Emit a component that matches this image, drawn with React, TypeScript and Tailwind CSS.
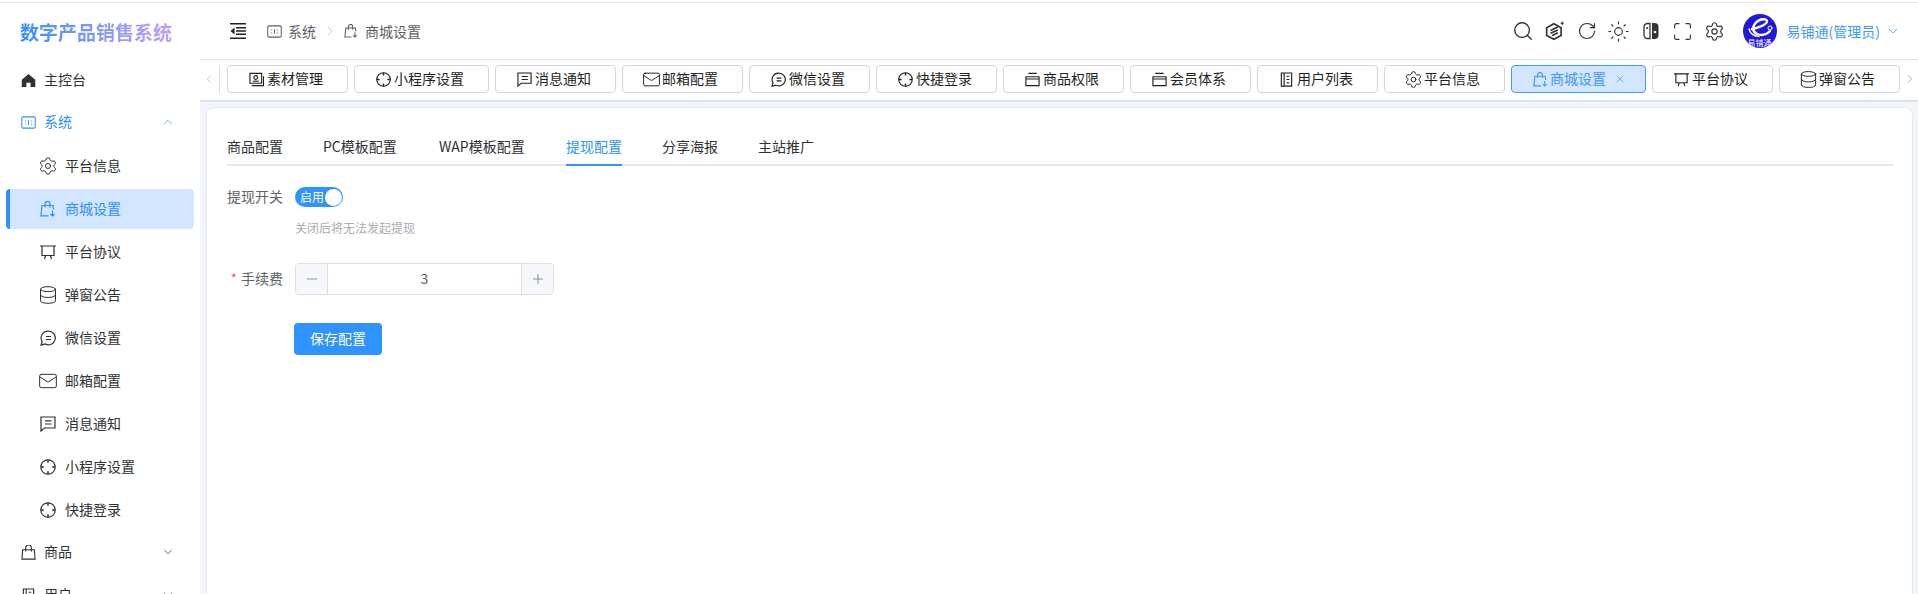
import { ChevronDown, ChevronLeft, ChevronRight, ChevronUp, Database, Mail, Maximize, Minus, Plus, RotateCw, Search, Settings, Sun, X } from "lucide-react";
import type { ReactNode } from "react";

type IconProps = { className?: string };

const HomeIcon = ({ className }: IconProps) => (
  <svg viewBox="0 0 16 16" className={className} fill="currentColor">
    <path d="M8 1 15.2 7.2V15H10.2V10.4H5.8V15H.8V7.2Z" />
  </svg>
);

const SystemIcon = ({ className }: IconProps) => (
  <svg viewBox="0 0 16 16" className={className} fill="none" stroke="currentColor" strokeWidth="1.1">
    <rect x=".8" y="2" width="14.4" height="12" rx="1.5" />
    <path d="M5 5.800v1.200M5 9v1.200M8 5.500v5M11 5.800v1.200M11 9v1.200" />
  </svg>
);

const BagArrowIcon = ({ className }: IconProps) => (
  <svg viewBox="0 0 16 16" className={className} fill="none" stroke="currentColor" strokeWidth="1.2">
    <path d="M8.500 14.800H1L2 4.500H13L13.500 8.500" />
    <path d="M5 6.500V3a2.500 2.500 0 0 1 5 0v3.500" />
    <path d="M12.500 9.500v5.500M10.500 13l2 2 2-2" />
  </svg>
);

const BoardIcon = ({ className }: IconProps) => (
  <svg viewBox="0 0 16 16" className={className} fill="none" stroke="currentColor" strokeWidth="1.2">
    <path d="M0 2h16M2 2v9.500h12V2M5.500 11.500 4.500 15M10.500 11.500l1 3.500" />
  </svg>
);

const ChatIcon = ({ className }: IconProps) => (
  <svg viewBox="0 0 16 16" className={className} fill="none" stroke="currentColor" strokeWidth="1.2">
    <path d="M8.500 1.200a6.800 6.800 0 1 1-3.200 12.800L1 15.200l1.200-3.600A6.800 6.800 0 0 1 8.500 1.200Z" />
    <path d="M6 6.500h5M6 9.500h5" />
  </svg>
);

const NoticeIcon = ({ className }: IconProps) => (
  <svg viewBox="0 0 16 16" className={className} fill="none" stroke="currentColor" strokeWidth="1.2">
    <path d="M1 1h14v11H4.500L1 15Z" />
    <path d="M5 4.800h6.500M5 8h6.500" />
  </svg>
);

const TargetIcon = ({ className }: IconProps) => (
  <svg viewBox="0 0 16 16" className={className} fill="none" stroke="currentColor" strokeWidth="1.2">
    <circle cx="8" cy="8" r="7.200" />
    <path d="M8 .8v3M8 12.200v3M.8 8h3M12.200 8h3" strokeWidth="1.500" />
  </svg>
);

const ShopBagIcon = ({ className }: IconProps) => (
  <svg viewBox="0 0 16 16" className={className} fill="none" stroke="currentColor" strokeWidth="1.2">
    <path d="M1.800 5h12.400l.8 10H1Z" />
    <path d="M5 7V3a3 3 0 0 1 6 0v4" />
  </svg>
);

const BookIcon = ({ className }: IconProps) => (
  <svg viewBox="0 0 16 16" className={className} fill="none" stroke="currentColor" strokeWidth="1.2">
    <path d="M2.500 1h11v14h-11ZM5.500 1v14M8 4.500h3M8 8h3M8 11.500h3" />
  </svg>
);

const StackBoxIcon = ({ className }: IconProps) => (
  <svg viewBox="0 0 16 16" className={className} fill="none" stroke="currentColor" strokeWidth="1.2">
    <path d="M3.500 1.500h9M1 5h14v9.500H1ZM1 7.500h14" />
  </svg>
);

const MediaIcon = ({ className }: IconProps) => (
  <svg viewBox="0 0 16 16" className={className} fill="none" stroke="currentColor" strokeWidth="1.2">
    <path d="M1 1.500h12.500v10.500H1Z" />
    <path d="M3 14.500h12.500V4.500" />
    <circle cx="7.200" cy="5.800" r="2" />
    <path d="M4 9.800h6.500" />
  </svg>
);

const CollapseIcon = ({ className }: IconProps) => (
  <svg viewBox="0 0 16 16" className={className} fill="currentColor">
    <path d="M0 0h16v1.600H0ZM0 14.400h16V16H0ZM6 4h10v1.500H6ZM6 7.200h10v1.500H6ZM6 10.500h10V12H6ZM4.500 4.500v7L.5 8Z" />
  </svg>
);

const HexIcon = ({ className }: IconProps) => (
  <svg viewBox="0 0 18 18" className={className} fill="none" stroke="currentColor" strokeWidth="1.500">
    <path d="M8 2.500 14.500 6v7L8 16.500 1.500 13V6Z" />
    <path d="M5 8.500 11.500 5.500M5 11 11.500 8M6.500 13 11.500 10.500" />
    <path d="M15.500 .5v3M14 2h3" strokeWidth="1" />
  </svg>
);

const SwitchIcon = ({ className }: IconProps) => (
  <svg viewBox="0 0 16 18" className={className}>
    <path d="M7 1.500H4.500a3.500 3.500 0 0 0-3.500 3.500v8a3.500 3.500 0 0 0 3.500 3.500H7Z" fill="none" stroke="currentColor" strokeWidth="1.300" />
    <path d="M9 1h2.500A4 4 0 0 1 15.500 5v8a4 4 0 0 1-4 4H9Z" fill="currentColor" />
    <circle cx="4.200" cy="6" r="1.100" fill="currentColor" />
    <circle cx="12" cy="10" r="1.300" fill="#fff" />
  </svg>
);

const Avatar = () => (
  <div className="relative h-[34px] w-[34px] overflow-hidden rounded-full bg-[#2318d8]">
    <svg viewBox="0 0 34 34" className="absolute inset-0 h-full w-full" fill="none" stroke="#fff" strokeLinecap="round">
      <path d="M9 15C15 14 23 11 24 7.500 24.500 4.500 17 4 12.500 9 9 13 9.500 18 14 20c5 2 10 0 13-3" strokeWidth="2.400" />
      <path d="M6 15c1 4 5 7 10 7.500" strokeWidth="1.400" />
      <circle cx="27" cy="14" r="2" strokeWidth="1" />
    </svg>
    <span className="absolute inset-x-0 bottom-[1px] text-center text-[8px] leading-[9px] whitespace-nowrap text-white">易铺通</span>
  </div>
);

function TopItem({ icon, label, open, active }: { icon: ReactNode; label: string; open?: boolean; active?: boolean }) {
  return (
    <div className={`flex h-10 items-center gap-[8px] pl-[15px] ${active ? "text-[#2f8fff]" : "text-[#303133]"}`}>
      {icon}
      <span className="pb-[2px]">{label}</span>
      {open === undefined ? null : open ? (
        <ChevronUp className="mr-[19px] ml-auto h-[14px] w-[14px]" strokeWidth={1.2} />
      ) : (
        <ChevronDown className="mr-[19px] ml-auto h-[14px] w-[14px]" strokeWidth={1.2} />
      )}
    </div>
  );
}

function SubItem({ icon, label, active }: { icon: ReactNode; label: string; active?: boolean }) {
  return (
    <div
      className={`flex h-10 items-center gap-[9px] rounded-[4px] ${
        active ? "border-l-4 border-[#2f8fff] bg-[#d2e6ff] pl-[30px] text-[#2f8fff]" : "pl-[34px] text-[#303133]"
      }`}
    >
      {icon}
      <span className="pb-[2px]">{label}</span>
    </div>
  );
}

function Tab({ icon, label }: { icon: ReactNode; label: string }) {
  return (
    <div className="flex h-7 shrink-0 items-center gap-[3px] rounded-[4px] border border-[#d4d4dc] bg-white pr-[24px] pl-[21px] text-[#1f1f1f]">
      {icon}
      <span className="pb-[2px]">{label}</span>
    </div>
  );
}

const i16 = "h-4 w-4 shrink-0";
const i15 = "h-[15px] w-[15px] shrink-0";
// los iconos de lucide traen aire dentro del viewBox
const side = "-m-[2px] h-5 w-5 shrink-0";
const tabIcon = "-m-[2px] h-[19px] w-[19px] shrink-0";
const slot = "flex w-8 justify-center";

export default function App() {
  return (
    <div
      className="h-[594px] w-[1918px] overflow-hidden bg-white pt-[2px] text-sm"
      style={{ fontFamily: '"Noto Sans CJK SC", "Noto Sans", sans-serif' }}
    >
      <div className="flex h-[592px] border-t border-t-[#e6e6e6] bg-[#f2f5fb]">
        {/* Menu lateral */}
        <aside className="w-[200px] shrink-0 bg-white">
          <div className="flex h-[57px] items-center pl-[20px]">
            <span className="bg-linear-to-r from-[#2a8fff] to-[#bb9cff] bg-clip-text text-[19px] font-bold text-transparent">数字产品销售系统</span>
          </div>
          <nav className="mx-[6px]">
            <div className="mb-[2px]">
              <TopItem icon={<HomeIcon className={i15} />} label="主控台" />
            </div>
            <div className="mb-[4px]">
              <TopItem icon={<SystemIcon className={i15} />} label="系统" open active />
            </div>
            <div className="mb-[2px] flex flex-col gap-[3px]">
              <SubItem icon={<Settings className={side} strokeWidth={1.2} />} label="平台信息" />
              <SubItem icon={<BagArrowIcon className={i16} />} label="商城设置" active />
              <SubItem icon={<BoardIcon className={i16} />} label="平台协议" />
              <SubItem icon={<Database className={side} strokeWidth={1.2} />} label="弹窗公告" />
              <SubItem icon={<ChatIcon className={i16} />} label="微信设置" />
              <SubItem icon={<Mail className={side} strokeWidth={1.2} />} label="邮箱配置" />
              <SubItem icon={<NoticeIcon className={i16} />} label="消息通知" />
              <SubItem icon={<TargetIcon className={i16} />} label="小程序设置" />
              <SubItem icon={<TargetIcon className={i16} />} label="快捷登录" />
            </div>
            <div className="mb-[3px]">
              <TopItem icon={<ShopBagIcon className={i15} />} label="商品" open={false} />
            </div>
            <TopItem icon={<BookIcon className={i15} />} label="用户" open={false} />
          </nav>
        </aside>

        <main className="flex min-w-0 flex-1 flex-col">
          {/* Cabecera */}
          <header className="flex h-[57px] shrink-0 items-center border-b border-[#e3e3e3] bg-white pl-[30px] text-[#303133]">
            <CollapseIcon className="h-4 w-4 text-[#222]" />
            <div className="ml-[21px] flex items-center text-[#5a5e66]">
              <SystemIcon className="h-[15px] w-[15px]" />
              <span className="ml-[6px]">系统</span>
              <ChevronRight className="mx-[6px] h-4 w-4 text-[#c4c6cc]" strokeWidth={1.3} />
              <BagArrowIcon className="h-[14px] w-[14px]" />
              <span className="ml-[7px]">商城设置</span>
            </div>
            <div className="ml-auto flex items-center text-[#333]">
              <div className={slot}>
                <Search className="h-[22px] w-[22px]" strokeWidth={1.5} />
              </div>
              <div className={slot}>
                <HexIcon className="h-[20px] w-[20px]" />
              </div>
              <div className={slot}>
                <RotateCw className="h-[20px] w-[20px]" strokeWidth={1.4} />
              </div>
              <div className={slot}>
                <Sun className="h-[23px] w-[23px]" strokeWidth={1.2} />
              </div>
              <div className={slot}>
                <SwitchIcon className="h-[18px] w-[16px]" />
              </div>
              <div className={slot}>
                <Maximize className="h-[21px] w-[21px]" strokeWidth={1.3} />
              </div>
              <div className={slot}>
                <Settings className="h-[21px] w-[21px]" strokeWidth={1.3} />
              </div>
              <div className="ml-[12px]">
                <Avatar />
              </div>
              <span className="ml-[10px] text-[#3f97ff]">易铺通(管理员)</span>
              <ChevronDown className="mr-[17px] ml-[5px] h-4 w-4 text-[#3f97ff]" strokeWidth={1.2} />
            </div>
          </header>

          {/* Pestañas */}
          <div className="flex h-[42px] shrink-0 items-center gap-[6px] border-b-2 border-[#dfe3ea] bg-white pb-[2px] text-[#1f1f1f]">
            <div className="mr-[1px] flex h-7 w-[20px] shrink-0 items-center justify-end border-r border-[#dcdfe6] pr-[3px]">
              <ChevronLeft className="h-[14px] w-[14px] text-[#b5b8bf]" strokeWidth={1.3} />
            </div>
            <Tab icon={<MediaIcon className={i15} />} label="素材管理" />
            <Tab icon={<TargetIcon className={i15} />} label="小程序设置" />
            <Tab icon={<NoticeIcon className={i15} />} label="消息通知" />
            <Tab icon={<Mail className={tabIcon} strokeWidth={1.2} />} label="邮箱配置" />
            <Tab icon={<ChatIcon className={i15} />} label="微信设置" />
            <Tab icon={<TargetIcon className={i15} />} label="快捷登录" />
            <Tab icon={<StackBoxIcon className={i15} />} label="商品权限" />
            <Tab icon={<StackBoxIcon className={i15} />} label="会员体系" />
            <Tab icon={<BookIcon className={i15} />} label="用户列表" />
            <Tab icon={<Settings className={tabIcon} strokeWidth={1.2} />} label="平台信息" />
            <div className="flex h-7 shrink-0 items-center gap-[2px] rounded-[4px] border border-[#3f97ff] bg-[#d2e6ff] pr-[19px] pl-[21px] text-[#3f97ff]">
              <BagArrowIcon className={i15} />
              <span className="pb-[2px]">商城设置</span>
              <X className="ml-[6px] h-3 w-3" strokeWidth={1.3} />
            </div>
            <Tab icon={<BoardIcon className={i15} />} label="平台协议" />
            <Tab icon={<Database className={tabIcon} strokeWidth={1.2} />} label="弹窗公告" />
            <ChevronRight className="-ml-[3px] h-[14px] w-[14px] shrink-0 text-[#9a9da5]" strokeWidth={1.3} />
          </div>

          {/* Contenido */}
          <div className="flex-1 pt-[5px] pr-[5px] pl-[6px]">
            <div className="h-[600px] rounded-lg border border-[#e6ebf3] bg-white pt-[27px] pr-[19px] pl-[20px]">
              <div className="flex gap-10 border-b-2 border-[#e4e7ed] text-[#303133]">
                <span className="pb-[7px] leading-[22px]">商品配置</span>
                <span className="w-[76px] pb-[7px] leading-[22px]">PC模板配置</span>
                <span className="w-[87px] pb-[7px] leading-[22px] whitespace-nowrap">WAP模板配置</span>
                <span className="-mb-[2px] border-b-2 border-[#2f93ff] pb-[7px] leading-[22px] text-[#2f93ff]">提现配置</span>
                <span className="pb-[7px] leading-[22px]">分享海报</span>
                <span className="pb-[7px] leading-[22px]">主站推广</span>
              </div>

              <div className="mt-[21px] flex h-5 items-center">
                <span className="w-14 pb-[2px] text-right text-[#5f6268]">提现开关</span>
                <div className="relative ml-3 h-5 w-12 rounded-full bg-[#2f93ff] pl-[5px] text-xs leading-[19px] text-white">
                  启用
                  <span className="absolute top-[1.5px] right-[1.5px] h-[17px] w-[17px] rounded-full bg-white" />
                </div>
              </div>
              <p className="mt-[11px] ml-[68px] text-xs leading-5 text-[#a8abb2]">关闭后将无法发起提现</p>

              <div className="mt-[25px] flex h-8 items-center">
                <span className="w-14 pb-[2px] text-right text-[#5f6268]">
                  <span className="mr-[4px] text-[#f56c6c]">*</span>手续费
                </span>
                <div className="ml-3 flex h-8 w-[259px] items-center rounded-[4px] border border-[#dcdfe6] text-[#606266]">
                  <span className="flex h-full w-8 items-center justify-center rounded-l-[4px] border-r border-[#dcdfe6] bg-[#f5f7fa]">
                    <Minus className="h-4 w-4" strokeWidth={1} />
                  </span>
                  <span className="flex-1 pb-[2px] text-center">3</span>
                  <span className="flex h-full w-8 items-center justify-center rounded-r-[4px] border-l border-[#dcdfe6] bg-[#f5f7fa]">
                    <Plus className="h-4 w-4" strokeWidth={1} />
                  </span>
                </div>
              </div>

              <button className="mt-[28px] ml-[67px] h-8 w-[88px] rounded-[4px] bg-[#2f93ff] pb-[2px] text-white">保存配置</button>
            </div>
          </div>
        </main>
      </div>
    </div>
  );
}
